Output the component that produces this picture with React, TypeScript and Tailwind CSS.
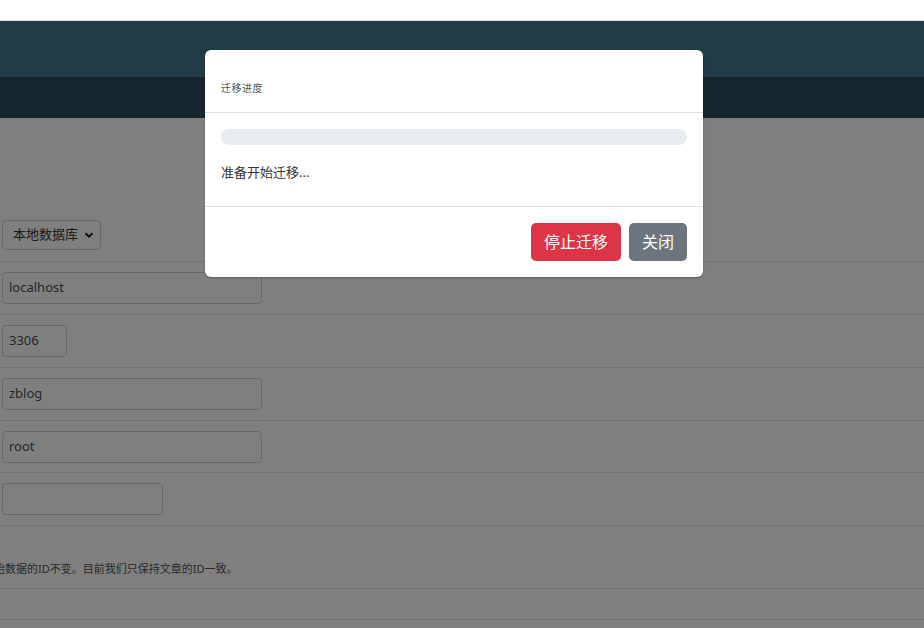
import React from "react";

const font = { fontFamily: '"Noto Sans", "Noto Sans CJK SC", sans-serif' };

function Row({ children, className = "" }: { children?: React.ReactNode; className?: string }) {
  return <div className={`border-b border-[#dee2e6] pl-[2px] ${className}`}>{children}</div>;
}

function Input({ value, w }: { value: string; w: string }) {
  return (
    <div
      className={`${w} h-[32px] rounded-[4px] border border-[#ced4da] bg-white px-[6px] flex items-center text-[13px] text-[#495057]`}
    >
      {value}
    </div>
  );
}

export default function App() {
  return (
    <div className="relative w-[924px] h-[628px] overflow-hidden bg-white" style={font}>
      <div className="h-[21px] bg-white border-b border-[#dcdcdc]" />
      <div className="h-[56px] bg-[#42768f]" />
      <div className="h-[41px] bg-[#2a4c5f]" />
      <div className="h-[91px]" />
      <Row className="h-[53px] flex items-center">
        <div className="h-[30px] w-[99px] rounded-[4px] border border-[#ced4da] bg-white flex items-center pl-[10px] pr-[6px] justify-between text-[13px] text-[#333]">
          <span>本地数据库</span>
          <svg width="10" height="10" viewBox="0 0 10 10">
            <path d="M1.5 3.2 L5 6.7 L8.5 3.2" stroke="#222" strokeWidth="2" fill="none" />
          </svg>
        </div>
      </Row>
      <Row className="py-[10px]">
        <Input value="localhost" w="w-[260px]" />
      </Row>
      <Row className="py-[10px]">
        <Input value="3306" w="w-[65px]" />
      </Row>
      <Row className="pt-[10px] pb-[10px]">
        <Input value="zblog" w="w-[260px]" />
      </Row>
      <Row className="pt-[10px] pb-[9px]">
        <Input value="root" w="w-[260px]" />
      </Row>
      <Row className="pt-[10px] pb-[10px]">
        <Input value="" w="w-[161px]" />
      </Row>
      <div className="h-[63px] border-b border-[#dee2e6] flex items-end pb-[11px] overflow-hidden">
        <span className="ml-[-6px] whitespace-nowrap text-[11px] text-[#555]">始数据的ID不变。目前我们只保持文章的ID一致。</span>
      </div>
      <div className="h-[31px] border-b border-[#dee2e6]" />

      <div className="absolute left-0 right-0 top-[21px] bottom-0 bg-black/50" />

      <div className="absolute left-[205px] top-[50px] w-[498px] rounded-[6px] bg-white shadow-[0_1px_2px_rgba(0,0,0,0.3)]">
        <div className="h-[63px] border-b border-[#dee2e6] flex items-end pb-[16px] px-[16px]">
          <span className="text-[10px] text-[#555] tracking-[0.5px]">迁移进度</span>
        </div>
        <div className="px-[16px] pt-[16px] pb-[25px]">
          <div className="h-[16px] rounded-[8px] bg-[#e9ecef]" />
          <div className="mt-[18px] text-[13px] text-[#333] leading-[18px]">准备开始迁移...</div>
        </div>
        <div className="border-t border-[#dee2e6] flex justify-end gap-[8px] px-[16px] pt-[16px] pb-[16px]">
          <div className="h-[38px] w-[90px] rounded-[5px] bg-[#dc3545] text-white text-[16px] flex items-center justify-center">
            停止迁移
          </div>
          <div className="h-[38px] w-[58px] rounded-[5px] bg-[#6c757d] text-white text-[16px] flex items-center justify-center">
            关闭
          </div>
        </div>
      </div>
    </div>
  );
}
